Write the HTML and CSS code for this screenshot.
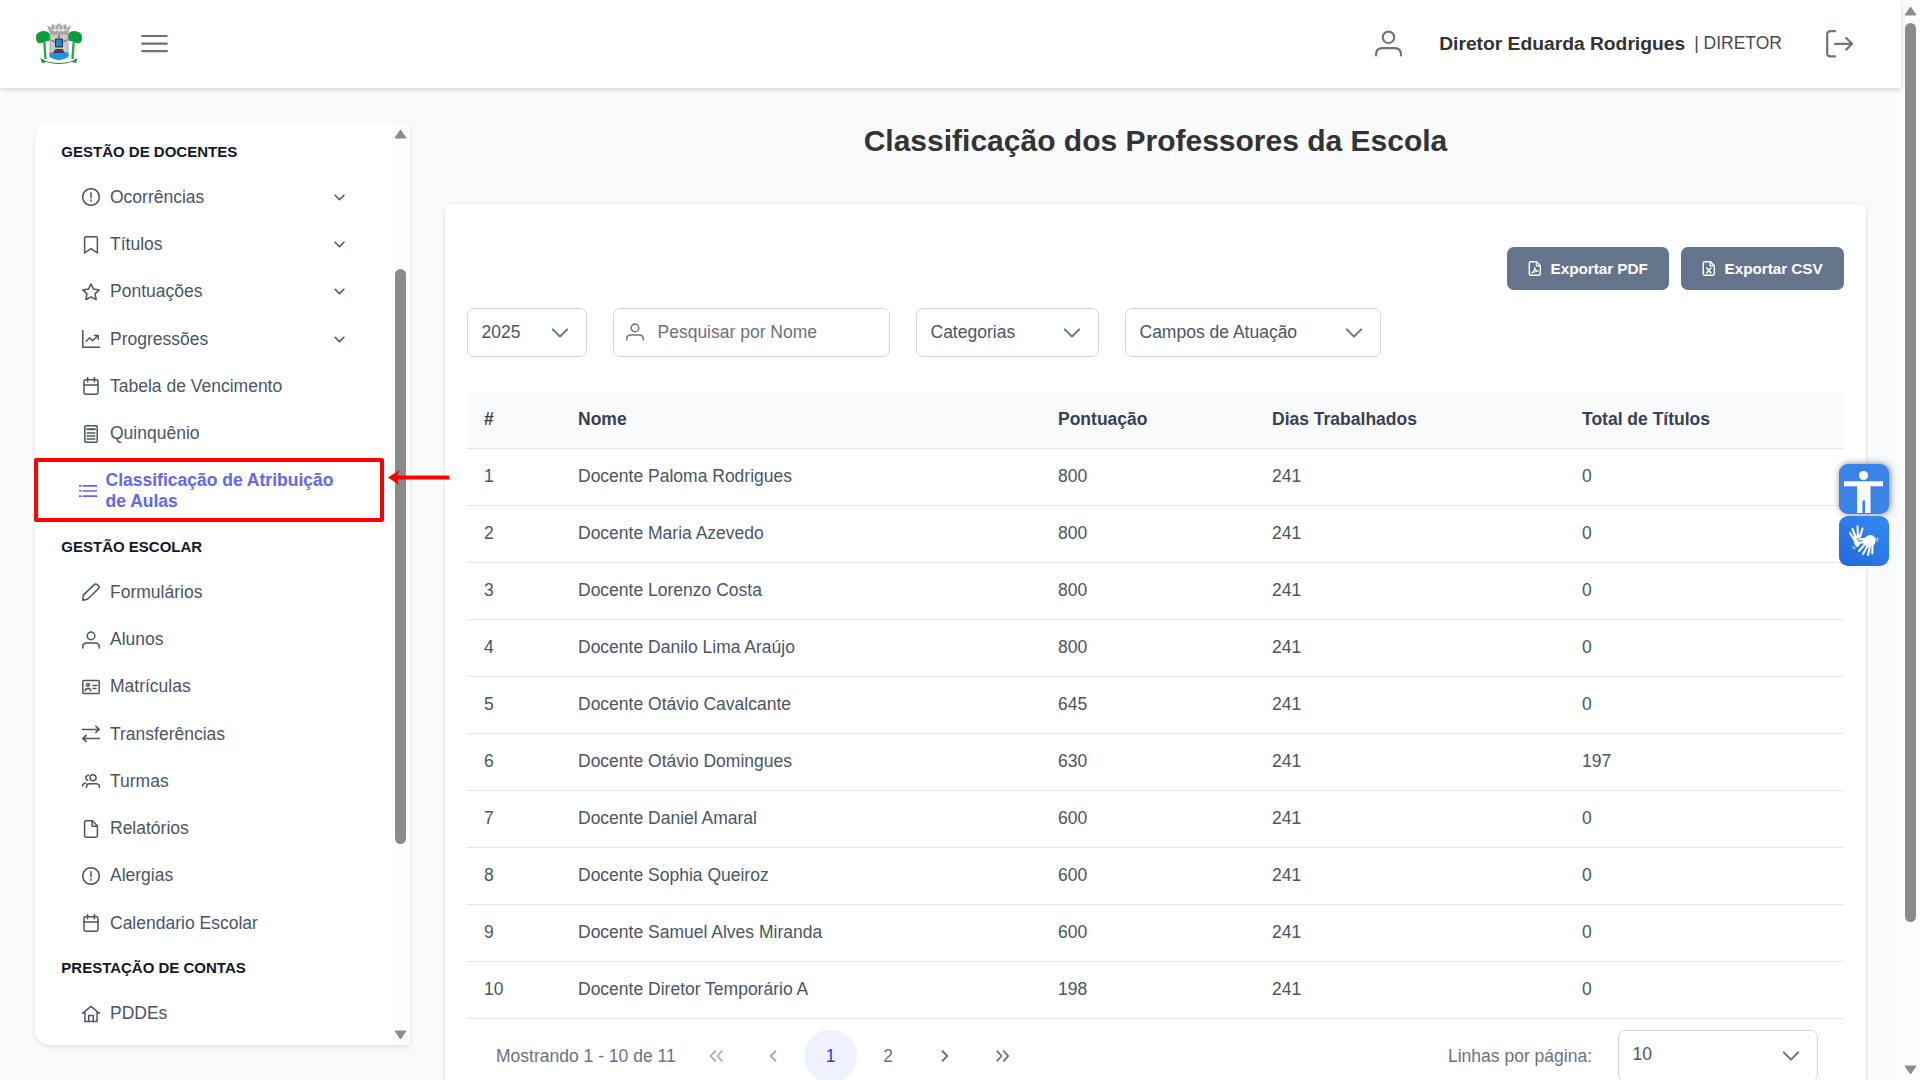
FILE: index.html
```html
<!DOCTYPE html>
<html lang="pt-BR">
<head>
<meta charset="utf-8">
<title>Classificação dos Professores da Escola</title>
<link rel="stylesheet" href="styles.css">
</head>
<body>
<svg class="defs" aria-hidden="true">
  <symbol id="i-alert" viewBox="0 0 18 18"><circle cx="9" cy="9" r="8.3"/><path d="M9 4.8v5"/><path d="M9 12v1.2"/></symbol>
  <symbol id="i-bookmark" viewBox="0 0 18 18"><path d="M2.6 17V2.2Q2.6.8 4 .8h10q1.4 0 1.4 1.4V17L9 12.6z"/></symbol>
  <symbol id="i-star" viewBox="0 0 18 18"><path d="M9 1l2.5 5.1 5.7.8-4.1 4 1 5.6L9 13.9l-5.1 2.6 1-5.6-4.1-4 5.700-.8z"/></symbol>
  <symbol id="i-chart" viewBox="0 0 18 18"><path d="M.8 0v17.2H18"/><path d="M4.3 11.3l3.400-3.500 2.800 3 5.300-5"/><path d="M12.500 5.600h3.700v3.600"/></symbol>
  <symbol id="i-calendar" viewBox="0 0 18 18"><rect x="2" y="2.8" width="14" height="14.4" rx="1.6"/><path d="M2 8h14M5.600.3v4.400M12.400.3v4.400"/></symbol>
  <symbol id="i-calc" viewBox="0 0 18 18"><rect x="2.8" y=".7" width="12.4" height="16.6" rx="1.4"/><path d="M5.200 4.200h7.600" stroke-width="2"/><path d="M5.200 8h1.800M8.100 8h1.800M11 8h1.800M5.200 11h1.800M8.100 11h1.800M11 11h1.800M5.200 14h4.700M11 14h1.800" stroke-width="1.5"/></symbol>
  <symbol id="i-list" viewBox="0 0 18 18"><path d="M4.400 3.800H18M4.400 9H18M4.400 14.200H18M0 3.800h2M0 9h2M0 14.200h2" stroke-width="1.7"/></symbol>
  <symbol id="i-pencil" viewBox="0 0 18 18"><path d="M.8 17.200l.5-5.100L12.200 1.600q1.400-1.300 3 0l1.200 1.100q1.400 1.500 0 3L5.500 16.300z"/></symbol>
  <symbol id="i-user" viewBox="0 0 18 18"><circle cx="9" cy="4.9" r="3.8"/><path d="M.7 17v-1.200q.3-3.500 4-3.700h8.600q3.700.2 4 3.700V17"/></symbol>
  <symbol id="i-card" viewBox="0 0 18 18"><rect x=".8" y="2.6" width="16.4" height="12.8" rx="1"/><circle cx="6" cy="7" r="1.4"/><path d="M3.200 12.800q0-2.400 2.800-2.400t2.800 2.400M11 7.400h4M11 10.600h3"/></symbol>
  <symbol id="i-swap" viewBox="0 0 18 18"><path d="M.3 4.400h16.600M13.800 1.200L17.200 4.400l-3.400 3.100M17.800 13.400H1.200M4.200 10.400L.8 13.400l3.400 3.200"/></symbol>
  <symbol id="i-users" viewBox="0 0 18 18"><circle cx="11" cy="5.8" r="3"/><path d="M4.500 15.400v-1q.1-2.600 2.800-2.700h7.300q2.700.1 2.800 2.700v1M6.600 3.200Q4 3.400 3.700 5.600q0 2 2 2.800M.6 14q0-2.600 3.200-3"/></symbol>
  <symbol id="i-file" viewBox="0 0 18 18"><path d="M10.400.8H4.200Q2.600.8 2.600 2.400v13.200q0 1.600 1.600 1.600h9.600q1.600 0 1.600-1.600V6z"/><path d="M10 .8v5.400h5.200"/></symbol>
  <symbol id="i-home" viewBox="0 0 18 18"><path d="M.6 8.300L9 1.300l8.400 7M2.900 7v9.500h12.200V7M6.700 16.400v-6h4.600v6"/></symbol>
  <symbol id="i-down" viewBox="0 0 18 18"><path d="M1.800 5.400L9 12.600l7.200-7.200"/></symbol>
  <symbol id="i-menu" viewBox="0 0 28 20"><path d="M1.200 2h24.600M1.200 9.600h24.600M1.200 17.200h24.600"/></symbol>
  <symbol id="i-exit" viewBox="0 0 28 28"><path d="M9 1.200H4.600Q1.200 1.200 1.200 4.200v19.200q0 3 3.400 3H9M9 13.800h17M20.200 8l5.900 5.800-5.900 5.800"/></symbol>
  <symbol id="i-pdf" viewBox="0 0 14 16"><path d="M8.600.8H2.400Q.9.8.9 2.300v11.400q0 1.500 1.500 1.500h8.800q1.500 0 1.500-1.500V5z"/><path d="M8.400.8v4.400h4.100M3.400 12.800q4.200-2.600 3.200-6.200M6.400 7q.4 3.200 4 3.800M4 12.400l6.200-1.700" stroke-width="1.1"/></symbol>
  <symbol id="i-xls" viewBox="0 0 14 16"><path d="M8.600.8H2.400Q.9.8.9 2.300v11.400q0 1.500 1.500 1.500h8.800q1.500 0 1.500-1.500V5z"/><path d="M8.400.8v4.400h4.100M4.600 7.400l4.400 5.200M9 7.400l-4.400 5.200"/></symbol>
  <symbol id="i-right" viewBox="0 0 8 12"><path d="M1.600 1.200L6.200 6l-4.600 4.800"/></symbol>
  <symbol id="i-dright" viewBox="0 0 14 12"><path d="M1.200 1.200L5.600 6l-4.400 4.800M7.800 1.200L12.200 6l-4.400 4.800"/></symbol>
</svg>

<div class="window">
  <div class="app">
    <header class="topbar">
      <svg class="crest" viewBox="0 0 46 42">
        <path d="M11 2l4 3 1-4 4 2 3-3 3 3 4-2 1 4 4-3-3 9H14z" fill="#aaa6a6"/>
        <path d="M15 7h17M19 3v6M23 3v6M27 3v6" stroke="#f2f0f0" stroke-width="1"/>
        <path d="M8.300 18l1.200 18M37.700 18l-1.200 18" stroke="#2fa74c" stroke-width="2.400"/>
        <path d="M0 14q0-5 7-6 6 0 7 4v5q-2 2-5 1-3 3-6 2-3 0-3-6zM46 14q0-5-7-6-6 0-7 4v5q2 2 5 1 3 3 6 2 3 0 3-6z" fill="#0b9e3c"/>
        <path d="M14 11h18v22q-2 3-9 4-7-1-9-4z" fill="#cbc8c8" stroke="#9b9797" stroke-width=".8"/>
        <path d="M13.500 30q5-2 9.500 0 5-2 9.500 0v4q-4 2-9.500 3-5.500-1-9.500-3z" fill="#1b95dc"/>
        <path d="M19.500 16h7v8h-7z" fill="#1787cf" stroke="#20303c" stroke-width="1"/>
        <path d="M18 29.500l1.500-3h7l1.500 3zM23 12v3M15.500 17l3 2M30.500 17l-3 2" fill="#4a3d36" stroke="#4a3d36" stroke-width="1"/>
        <path d="M4.500 35l5 3q13.500 4 27 0l5-3-1.500 5-4-1q-13 4-26 0l-4 1z" fill="#23863a"/>
      </svg>
      <svg class="ic menu-btn"><use href="#i-menu"/></svg>
      <div class="account">
        <svg class="ic account-user"><use href="#i-user"/></svg>
        <span class="account-name">Diretor Eduarda Rodrigues</span>
        <span class="account-role">| DIRETOR</span>
        <svg class="ic account-exit"><use href="#i-exit"/></svg>
      </div>
    </header>

    <div class="body">
      <aside class="sidebar">
        <nav class="menu">
          <h2 class="menu-title">GESTÃO DE DOCENTES</h2>
          <a class="item"><svg class="ic"><use href="#i-alert"/></svg><span>Ocorrências</span><svg class="ic caret"><use href="#i-down"/></svg></a>
          <a class="item"><svg class="ic"><use href="#i-bookmark"/></svg><span>Títulos</span><svg class="ic caret"><use href="#i-down"/></svg></a>
          <a class="item"><svg class="ic"><use href="#i-star"/></svg><span>Pontuações</span><svg class="ic caret"><use href="#i-down"/></svg></a>
          <a class="item"><svg class="ic"><use href="#i-chart"/></svg><span>Progressões</span><svg class="ic caret"><use href="#i-down"/></svg></a>
          <a class="item"><svg class="ic"><use href="#i-calendar"/></svg><span>Tabela de Vencimento</span></a>
          <a class="item"><svg class="ic"><use href="#i-calc"/></svg><span>Quinquênio</span></a>
          <a class="item active"><svg class="ic"><use href="#i-list"/></svg><span>Classificação de Atribuição de Aulas</span></a>
          <h2 class="menu-title">GESTÃO ESCOLAR</h2>
          <a class="item"><svg class="ic"><use href="#i-pencil"/></svg><span>Formulários</span></a>
          <a class="item"><svg class="ic"><use href="#i-user"/></svg><span>Alunos</span></a>
          <a class="item"><svg class="ic"><use href="#i-card"/></svg><span>Matrículas</span></a>
          <a class="item"><svg class="ic"><use href="#i-swap"/></svg><span>Transferências</span></a>
          <a class="item"><svg class="ic"><use href="#i-users"/></svg><span>Turmas</span></a>
          <a class="item"><svg class="ic"><use href="#i-file"/></svg><span>Relatórios</span></a>
          <a class="item"><svg class="ic"><use href="#i-alert"/></svg><span>Alergias</span></a>
          <a class="item"><svg class="ic"><use href="#i-calendar"/></svg><span>Calendario Escolar</span></a>
          <h2 class="menu-title">PRESTAÇÃO DE CONTAS</h2>
          <a class="item"><svg class="ic"><use href="#i-home"/></svg><span>PDDEs</span></a>
        </nav>
        <div class="scroll scroll-side">
          <svg class="tri" viewBox="0 0 13 10"><path d="M6.500 1L12 9H1z"/></svg>
          <div class="track"><div class="thumb"></div></div>
          <svg class="tri" viewBox="0 0 13 10"><path d="M6.500 9L12 1H1z"/></svg>
        </div>
      </aside>

      <main class="content">
        <h1 class="title">Classificação dos Professores da Escola</h1>
        <section class="card">
          <div class="actions">
            <button class="btn pdf"><svg class="ic"><use href="#i-pdf"/></svg>Exportar PDF</button>
            <button class="btn csv"><svg class="ic"><use href="#i-xls"/></svg>Exportar CSV</button>
          </div>
          <div class="filters">
            <div class="field year"><span>2025</span><svg class="ic chev"><use href="#i-down"/></svg></div>
            <div class="field search"><svg class="ic"><use href="#i-user"/></svg><span>Pesquisar por Nome</span></div>
            <div class="field category"><span>Categorias</span><svg class="ic chev"><use href="#i-down"/></svg></div>
            <div class="field area"><span>Campos de Atuação</span><svg class="ic chev"><use href="#i-down"/></svg></div>
          </div>
          <table class="grid">
            <colgroup><col class="c-num"><col class="c-name"><col class="c-score"><col class="c-days"><col></colgroup>
            <thead><tr><th>#</th><th>Nome</th><th>Pontuação</th><th>Dias Trabalhados</th><th>Total de Títulos</th></tr></thead>
            <tbody>
              <tr><td>1</td><td>Docente Paloma Rodrigues</td><td>800</td><td>241</td><td>0</td></tr>
              <tr><td>2</td><td>Docente Maria Azevedo</td><td>800</td><td>241</td><td>0</td></tr>
              <tr><td>3</td><td>Docente Lorenzo Costa</td><td>800</td><td>241</td><td>0</td></tr>
              <tr><td>4</td><td>Docente Danilo Lima Araújo</td><td>800</td><td>241</td><td>0</td></tr>
              <tr><td>5</td><td>Docente Otávio Cavalcante</td><td>645</td><td>241</td><td>0</td></tr>
              <tr><td>6</td><td>Docente Otávio Domingues</td><td>630</td><td>241</td><td>197</td></tr>
              <tr><td>7</td><td>Docente Daniel Amaral</td><td>600</td><td>241</td><td>0</td></tr>
              <tr><td>8</td><td>Docente Sophia Queiroz</td><td>600</td><td>241</td><td>0</td></tr>
              <tr><td>9</td><td>Docente Samuel Alves Miranda</td><td>600</td><td>241</td><td>0</td></tr>
              <tr><td>10</td><td>Docente Diretor Temporário A</td><td>198</td><td>241</td><td>0</td></tr>
            </tbody>
          </table>
          <div class="pager">
            <span class="pager-info">Mostrando 1 - 10 de 11</span>
            <div class="pages">
              <span class="page off flip"><svg class="ic dbl"><use href="#i-dright"/></svg></span>
              <span class="page off flip"><svg class="ic sgl"><use href="#i-right"/></svg></span>
              <span class="page current">1</span>
              <span class="page">2</span>
              <span class="page"><svg class="ic sgl"><use href="#i-right"/></svg></span>
              <span class="page"><svg class="ic dbl"><use href="#i-dright"/></svg></span>
            </div>
            <span class="per-page">Linhas por página:</span>
            <div class="field size"><span>10</span><svg class="ic chev"><use href="#i-down"/></svg></div>
          </div>
        </section>
      </main>
    </div>
  </div>
  <div class="scroll scroll-page">
    <svg class="tri" viewBox="0 0 13 10"><path d="M6.500 1L12 9H1z"/></svg>
    <div class="track"><div class="thumb"></div></div>
    <svg class="tri" viewBox="0 0 13 10"><path d="M6.500 9L12 1H1z"/></svg>
  </div>
</div>

<div class="highlight"></div>
<svg class="arrow" viewBox="0 0 62 16"><path d="M6 7.500h55" stroke="#f00" stroke-width="4"/><path d="M0 7.500L11.500 0 8.500 7.500l3 7.500z" fill="#f00"/></svg>

<div class="widgets">
  <svg class="widget access" viewBox="0 0 50 50"><circle cx="24.500" cy="11.500" r="4.600"/><path d="M5 17.300h39v5H31.500V49H26V36.500h-2.600V49H18V22.300H5z"/></svg>
  <svg class="widget libras" viewBox="0 0 50 50">
    <g fill="none" stroke="#fff" stroke-width="2.100" stroke-linecap="round">
      <path d="M16 25l-5-8M17 22l-3.500-9M19 20l-.5-9.500M21 21l2.500-8.500M28 22.500l-8 1M27 27l-7 8M29 29l-5 9M31 30l-2 9M33.500 29l-.2 8.500"/>
    </g>
    <path d="M14.500 20.500l6.500-2 .5 2.500-3.500 1.500 1 3 4 .5-4.500 5.500q-4-2-4-11zM24 24l4-4q4-2 7 .5 3 4 0 8.500l-6 2-4-3.500-6 .2z"/>
    <path d="M36.500 21.500l.8 4M38.700 21.500v4M13 31.500l2-1 1.500 1.500-1.500 1z" fill="none" stroke="#cfe2fb" stroke-width=".9"/>
  </svg>
</div>
</body>
</html>
```
FILE: styles.css
```css
* { box-sizing: border-box; }

body {
  margin: 0;
  height: 1080px;
  overflow: hidden;
  position: relative;
  background: #f8fafc;
  color: #4b5563;
  font: 17.5px/21px "Liberation Sans", Arial, sans-serif;
}

.defs { display: none; }

.ic {
  width: 18px;
  height: 18px;
  flex: none;
  fill: none;
  stroke: currentColor;
  stroke-width: 1.5;
  stroke-linecap: round;
  stroke-linejoin: round;
}

.window { display: flex; height: 1080px; }
.app { flex: 1; display: flex; flex-direction: column; min-width: 0; }

/* Top bar */
.topbar {
  display: flex;
  align-items: center;
  flex: none;
  height: 88px;
  padding: 0 47px 0 36px;
  background: #fff;
  box-shadow: 0 2px 5px rgba(0, 0, 0, .14);
  z-index: 1;
}
.crest { width: 46px; height: 42px; }
.menu-btn { width: 28px; height: 20px; margin-left: 59px; stroke-width: 2.2; color: #6b7280; }
.account { display: flex; align-items: center; margin-left: auto; padding-bottom: 1px; color: #6b7280; }
.account-user { width: 27px; height: 27px; stroke-width: 1.4; }
.account-name { margin-left: 37px; padding-bottom: 1px; color: #333; font-size: 19.25px; font-weight: bold; }
.account-role { margin-left: 9px; padding-bottom: 1px; color: #4a4a4a; }
.account-exit { width: 28px; height: 28px; margin-left: 44px; stroke-width: 2.2; }

/* Layout under the bar */
.body { display: flex; flex: 1; min-height: 0; padding: 35px 35px 0; gap: 35px; }

.sidebar {
  display: flex;
  flex: none;
  width: 375px;
  height: 922px;
  background: #fff;
  border-radius: 15px 0 0 15px;
  box-shadow: 0 2px 5px rgba(0, 0, 0, .1);
}
.menu { flex: 1; padding-top: 7.600px; overflow: hidden; }
.menu-title {
  height: 43.200px;
  margin: 0;
  padding: 12.700px 0 0 26.300px;
  color: #111827;
  font-size: 15px;
  line-height: 18px;
}
.item {
  display: flex;
  align-items: center;
  gap: 10.500px;
  padding: 13.125px 45px 13.125px 46.500px;
}
.item.active { gap: 9px; padding-left: 43.500px; color: #6366f1; }
.item.active span { font-weight: bold; }
.caret { width: 11px; height: 11px; margin-left: auto; margin-right: 1.500px; stroke-width: 2.600; }

/* Scroll bars */
.scroll {
  display: flex;
  flex-direction: column;
  align-items: center;
  flex: none;
  width: 19px;
  padding: 6px 0 5px;
  background: #fcfcfc;
}
.tri { width: 13px; height: 10px; fill: #8b8b8b; stroke: #8b8b8b; stroke-linejoin: round; }
.track { flex: 1; padding-top: 7px; }
.thumb { width: 11px; height: 899px; border-radius: 6px; background: #8b8b8b; }
.scroll-side .track { padding-top: 130px; }
.scroll-side .thumb { height: 575px; }

/* Main area */
.content { display: flex; flex: 1; flex-direction: column; min-width: 0; }
.title {
  margin: 0;
  padding-bottom: 45px;
  color: #333;
  font-size: 30px;
  line-height: 36px;
  text-align: center;
}
.card {
  flex: 1;
  padding: 43px 22px 0;
  background: #fff;
  border-radius: 7px 7px 0 0;
  box-shadow: 0 1px 4px rgba(0, 0, 0, .13);
}
.actions { display: flex; justify-content: flex-end; gap: 12px; }
.btn {
  display: flex;
  align-items: center;
  height: 43px;
  gap: 9px;
  padding: 0 0 0 20.500px;
  border: 0;
  border-radius: 7px;
  background: #64748b;
  color: #fff;
  font: bold 15.313px/18px "Liberation Sans", Arial, sans-serif;
  letter-spacing: -.04px;
  white-space: nowrap;
}
.pdf { width: 162px; }
.csv { width: 163px; }
.btn .ic { width: 14px; height: 15px; }

.filters { display: flex; gap: 26px; margin-top: 18px; }
.field {
  display: flex;
  align-items: center;
  justify-content: space-between;
  height: 49px;
  padding: 0 17.500px 1px 13.500px;
  border: 1px solid #d1d5db;
  border-radius: 7px;
  background: #fff;
}
.chev { margin-top: 1px; stroke-width: 2; color: #6b7280; }
.year { width: 120px; }
.search { width: 277px; justify-content: flex-start; gap: 13.500px; padding-left: 12px; color: #6b7280; }
.category { width: 183px; }
.area { width: 256px; }

.grid {
  width: 1377px;
  margin-top: 35px;
  border-collapse: separate;
  border-spacing: 0;
  table-layout: fixed;
}
.c-num { width: 94px; }
.c-name { width: 480px; }
.c-score { width: 214px; }
.c-days { width: 310px; }
.grid th,
.grid td {
  height: 57px;
  padding: 0 17.500px 1px 17px;
  border-bottom: 1px solid #e5e7eb;
  text-align: left;
}
.grid th { background: #f9fafb; color: #374151; }

.pager { display: flex; align-items: center; height: 74px; padding: 0 26px 0 29px; color: #6b7280; }
.pages { display: flex; gap: 4.900px; margin-left: 14px; }
.page {
  display: flex;
  align-items: center;
  justify-content: center;
  width: 52.500px;
  height: 52.500px;
  border-radius: 50%;
}
.page.current { background: #eef2ff; color: #4338ca; }
.page.off { color: #a5aab4; }
.page.flip .ic { transform: scaleX(-1); }
.sgl { width: 8px; height: 12px; stroke-width: 2; }
.dbl { width: 14px; height: 12px; stroke-width: 1.800; }
.per-page { margin-left: auto; }
.size { width: 200px; height: 52.500px; margin-left: 26px; padding-bottom: 4px; color: #4b5563; }
.size .chev { margin-top: 4px; }

/* Marker over the active menu entry */
.highlight {
  position: absolute;
  left: 34px;
  top: 458px;
  width: 350px;
  height: 64px;
  border: 4px solid #f00;
  border-radius: 2px;
}
.arrow { position: absolute; left: 388px; top: 470px; width: 62px; height: 16px; }

/* Floating accessibility buttons */
.widgets { position: absolute; left: 1839px; top: 464px; display: flex; flex-direction: column; gap: 1.500px; }
.widget { width: 50px; height: 50px; border-radius: 9px; fill: #fff; }
.access { background: #3984e6; box-shadow: 1px 0 7px rgba(0, 0, 0, .5); }
.libras { background: linear-gradient(35deg, #2467d6, #318cf8); position: relative; }
```
